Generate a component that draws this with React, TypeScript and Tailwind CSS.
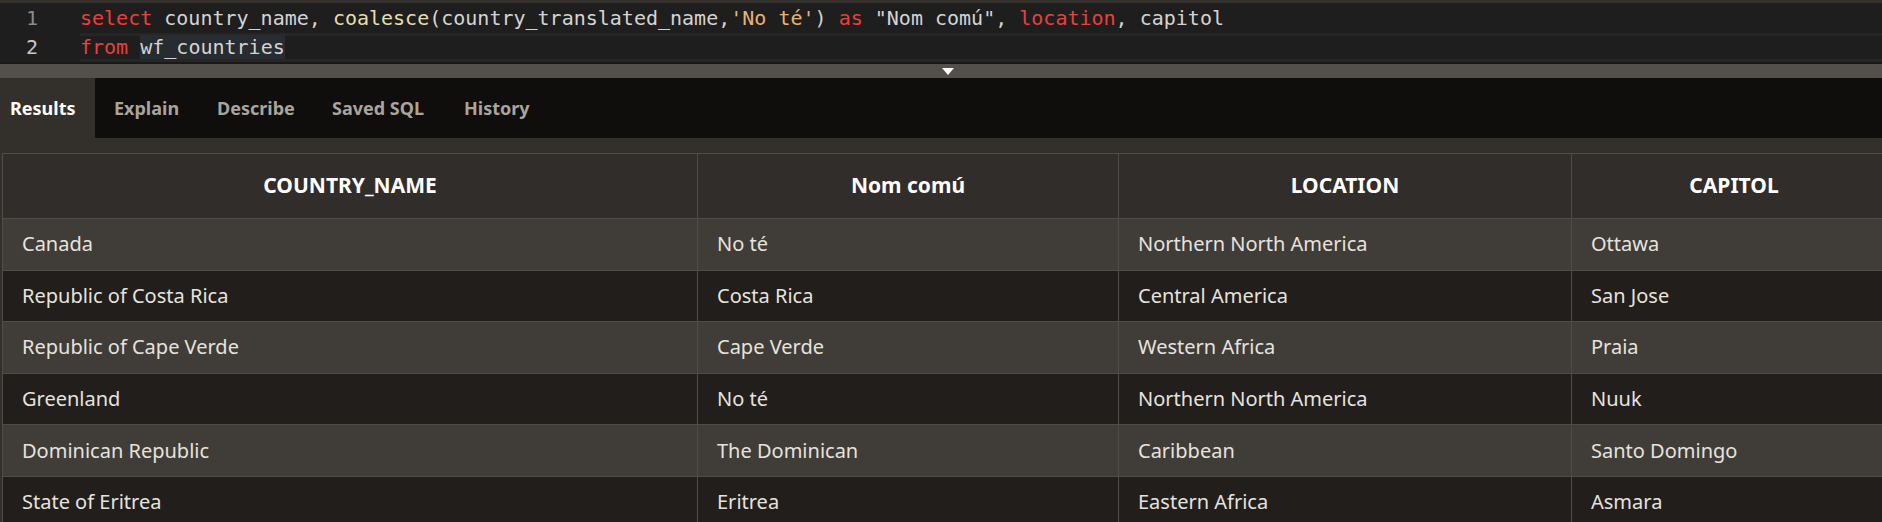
const rows = [
  ['Canada', 'No té', 'Northern North America', 'Ottawa'],
  ['Republic of Costa Rica', 'Costa Rica', 'Central America', 'San Jose'],
  ['Republic of Cape Verde', 'Cape Verde', 'Western Africa', 'Praia'],
  ['Greenland', 'No té', 'Northern North America', 'Nuuk'],
  ['Dominican Republic', 'The Dominican', 'Caribbean', 'Santo Domingo'],
  ['State of Eritrea', 'Eritrea', 'Eastern Africa', 'Asmara'],
]

const tabs = [
  { label: 'Explain', w: 'w-[103px]' },
  { label: 'Describe', w: 'w-[115px]' },
  { label: 'Saved SQL', w: 'w-[132px]' },
  { label: 'History', w: 'w-[120px]' },
]

function Editor() {
  return (
    <div className="bg-[#1e1e1e] border-t-[3px] border-[#34312d] font-['DejaVu_Sans_Mono',monospace] text-[20px] text-[#d4d4d4]">
      <div className="flex h-[30px] items-center">
        <span className="w-[38px] text-right text-[#8b8b8b]">1</span>
        <div className="ml-[42px] whitespace-pre">
          <span className="text-[#ec3f3a]">select</span> country_name, <span className="text-[#e6dfa8]">coalesce</span>(country_translated_name,<span className="text-[#e9b46e]">'No té'</span>) <span className="text-[#ec3f3a]">as</span> "Nom comú", <span className="text-[#ec3f3a]">location</span>, capitol
        </div>
      </div>
      <div className="flex h-[29px]">
        <span className="w-[38px] text-right text-[#c8c8c8] leading-[23px] mt-[3px]">2</span>
        <div className="ml-[42px] flex-1 border-y-[3px] border-[#262626] leading-[23px] whitespace-pre">
          <span className="text-[#ec3f3a]">from</span> <span className="bg-[#272c30]">wf_countries</span>
        </div>
      </div>
      <div className="h-[2px] bg-[#1a1918]" />
    </div>
  )
}

export default function App() {
  return (
    <div className="w-full h-[522px] overflow-hidden bg-[#33302c]">
      <Editor />

      <div className="h-[14px] bg-[#53504b] flex items-center justify-center">
        <svg width="12" height="7" viewBox="0 0 12 7" className="ml-[14px]">
          <path d="M0 0h12L6 7z" fill="#ffffff" />
        </svg>
      </div>

      <div className="h-[60px] bg-[#0f0e0c] flex font-['Noto_Sans',sans-serif] text-[18px] font-bold">
        <div className="w-[95px] bg-[#33302c] pl-[10px] flex items-center text-white">Results</div>
        {tabs.map(t => (
          <div key={t.label} className={`${t.w} pl-[19px] flex items-center text-[#a9a49e]`}>{t.label}</div>
        ))}
      </div>

      <div className="pt-[15px] pl-[2px]">
        <table className="table-fixed border-collapse w-[1960px] font-['Noto_Sans',sans-serif] text-[20px]">
          <colgroup>
            <col className="w-[695px]" />
            <col className="w-[421px]" />
            <col className="w-[453px]" />
            <col className="w-[391px]" />
          </colgroup>
          <thead>
            <tr className="h-[65px] bg-[#312d2a]">
              {['COUNTRY_NAME', 'Nom comú', 'LOCATION', 'CAPITOL'].map((h, i) => (
                <th key={h} className={`border border-[#4f4c48] font-bold text-[21px] text-white text-center ${i === 3 ? 'pr-[66px]' : ''}`}>{h}</th>
              ))}
            </tr>
          </thead>
          <tbody>
            {rows.map((r, i) => (
              <tr key={i} className={`h-[51.6px] ${i % 2 === 0 ? 'bg-[#403c38]' : 'bg-[#211e1b]'}`}>
                {r.map((c, j) => (
                  <td key={j} className="border border-[#4f4c48] pl-[19px] text-[#e6e3df]">{c}</td>
                ))}
              </tr>
            ))}
          </tbody>
        </table>
      </div>
    </div>
  )
}
